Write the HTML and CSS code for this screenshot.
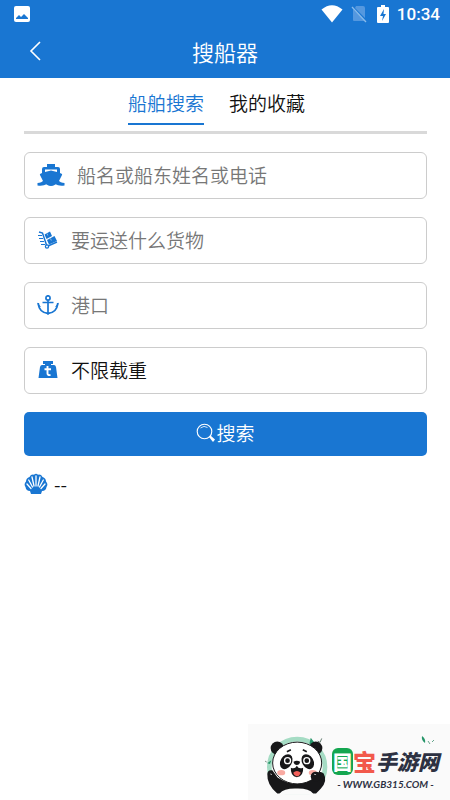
FILE: index.html
```html
<!DOCTYPE html>
<html lang="zh-CN">
<head>
<meta charset="utf-8">
<meta name="viewport" content="width=device-width, initial-scale=1">
<title>搜船器</title>
<link rel="stylesheet" href="styles.css">
</head>
<body>
<header class="header">
  <div class="status">
    <svg class="status-photo" viewBox="0 0 16 16" width="16" height="16" aria-hidden="true"><rect width="16" height="16" rx="2" fill="#fff"/><path d="M2 13V12L5 9 7 11 10 8 14 12V13Z" fill="#1976d2"/></svg>
    <svg viewBox="0 0 22 18" width="22" height="18" aria-hidden="true"><path d="M.5 4.500Q11-4 21.500 4.500L11 17.500Z" fill="#fff"/></svg>
    <svg class="status-sim" viewBox="0 0 16 18" width="16" height="18" aria-hidden="true"><path d="M5 1H12Q14 1 14 3V13L4 3ZM2 4 14 16H3Q2 16 2 15Z" fill="#5598df"/><path d="M1 2 15 17" stroke="#8bbbea" stroke-width="1.300"/></svg>
    <svg class="status-battery" viewBox="0 0 12 18" width="12" height="18" aria-hidden="true"><path d="M4 0H8V2H11Q12 2 12 3V17Q12 18 11 18H1Q0 18 0 17V3Q0 2 1 2H4Z" fill="#fff"/><path d="M7 4 3 11H6L5 16 9 9H6.500Z" fill="#1976d2"/></svg>
    <span class="clock">10:34</span>
  </div>
  <div class="titlebar">
    <button class="back" type="button" aria-label="返回"><svg viewBox="0 0 12 20" width="12" height="20"><path d="M11 1 2 10 11 19" fill="none" stroke="#fff" stroke-width="1.600"/></svg></button>
    <h1 class="title">搜船器</h1>
  </div>
</header>
<main class="main">
  <nav class="tabs">
    <a class="tab tab-active" href="#search">船舶搜索</a>
    <a class="tab" href="#saved">我的收藏</a>
  </nav>
  <form class="form" id="search">
    <label class="field">
      <svg viewBox="0 0 28 24" width="28" height="24" aria-hidden="true"><g fill="#1976d2"><path d="M10 1H18V4H21Q23 4 23 6V10L25 11Q25.500 11.500 24.500 13L22 18Q18 23 14 23Q10 23 6 18L3.500 13Q2.500 11.500 3 11L5 10V6Q5 4 7 4H10Z"/><path d="M.5 20Q4.500 20 7 17L10 21Q6 23.500 .5 22.500ZM27.500 20Q23.500 20 21 17L18 21Q22 23.500 27.500 22.500Z"/></g><path d="M8 9V6.500H20V9L14 7.500Z" fill="#fff"/></svg>
      <input class="control" type="text" aria-label="船名或船东" placeholder="船名或船东姓名或电话">
    </label>
    <label class="field">
      <svg viewBox="0 0 22 20" width="22" height="20" aria-hidden="true"><g fill="none" stroke="#1976d2"><path d="M2 2 5.500 3 10 16.500 20 12" stroke-width="1.500"/><path d="M1 5.500H5M2 8.500H6M3 11.500H7M4 14.500H8" stroke-width="1"/><circle cx="10" cy="16.500" r="1.600" fill="#fff" stroke-width="1.300"/></g><path d="M7.500 4.500 13 1.500 15 6 9.500 9ZM10 10 17.500 6 20 11 12 14.500Z" fill="#1976d2"/><path d="m10 3.500.8 2M13.500 8.500l.8 2" stroke="#8fbce8"/></svg>
      <input class="control" type="text" aria-label="货物" placeholder="要运送什么货物">
    </label>
    <label class="field">
      <svg viewBox="0 0 22 20" width="22" height="20" aria-hidden="true"><g fill="none" stroke="#1976d2" stroke-width="1.700"><circle cx="11" cy="2.900" r="2.100"/><path d="M11 5V19M5.500 7.500H16.500M1.200 8Q2 17.500 11 18.500Q20 17.500 20.800 8"/></g><path d="M.3 7.500 4 12 1 11.500ZM21.700 7.500 18 12 21 11.500ZM8 17.500H14L11 20Z" fill="#1976d2"/></svg>
      <input class="control" type="text" aria-label="港口" placeholder="港口">
    </label>
    <label class="field">
      <svg viewBox="0 0 22 20" width="22" height="20" aria-hidden="true"><path d="M6 1H16V4H14V5H17Q18.500 5 19 7L20.500 18H1.500L3 7Q3.500 5 5 5H8V4H6Z" fill="#1976d2"/><path d="M10.500 6V13.500Q10.500 15.500 13.500 15M7.500 9.200H14" fill="none" stroke="#fff" stroke-width="1.900"/></svg>
      <select class="control" aria-label="载重"><option>不限载重</option></select>
    </label>
    <button class="submit" type="submit">
      <svg viewBox="0 0 20 20" width="20" height="20" aria-hidden="true"><circle cx="8.500" cy="8.500" r="7.300" fill="none" stroke="#fff" stroke-width="1.100"/><path d="M4.500 5Q8 2 11.500 4.500" fill="none" stroke="#fff" stroke-width=".8"/><path d="m13 14 1.500-1.500 4.500 4-2 2.500Z" fill="#fff"/></svg>搜索
    </button>
  </form>
  <p class="result">
    <svg viewBox="0 0 24 22" width="24" height="22" aria-hidden="true"><path d="M7 21 6 18Q2 18 1.500 14Q-.5 11 2 8.500Q2 5 5.500 4Q7 1 10 1.700Q12 0 14 1.700Q17 1 18.500 4Q22 5 22 8.500Q24.500 11 22.500 14Q22 18 18 18L17 21Z" fill="#1976d2"/><g fill="none" stroke="#fff" stroke-width="1.300" stroke-linecap="round"><path d="M12 3V13M8 4 10 13M16 4 14 13M4.700 7 8.500 14M19.300 7 15.500 14M3 11 7 15.500M21 11 17 15.500"/></g></svg>
    <span>--</span>
  </p>
</main>
<aside class="brand">
  <svg viewBox="60 45 190 180" width="63" height="60" aria-hidden="true">
    <circle cx="157" cy="141" r="84" fill="none" stroke="#a5dcc4" stroke-width="14"/>
    <path d="M104 200H210V225H104Z" fill="#fafafa"/>
    <path d="M194 70 198 53 210 69 204 79ZM67 130 79 121 75 132Z" fill="#269569"/>
    <path d="m219 63 7 4 5-12M60 122l5 5" fill="none" stroke="#60786d" stroke-width="3"/>
    <circle cx="97" cy="84" r="20" fill="#171719"/><circle cx="213" cy="84" r="20" fill="#171719"/>
    <path d="M67 162Q68 148 82 151L98 173Q150 208 198 180L206 166Q222 148 237 161Q250 184 228 207L214 221H97Q65 194 67 162Z" fill="#171719"/>
    <path d="M104 221Q117 205 155 206Q193 205 205 221V225H104Z" fill="#fafafa"/>
    <ellipse cx="157" cy="129" rx="74" ry="63" fill="#fff" stroke="#171719" stroke-width="3"/>
    <ellipse cx="124" cy="125" rx="17" ry="24" transform="rotate(30 124 125)" fill="#171719"/><ellipse cx="189" cy="125" rx="17" ry="24" transform="rotate(-30 189 125)" fill="#171719"/>
    <g fill="#171719" stroke="#fff" stroke-width="4"><circle cx="128" cy="122" r="9"/><circle cx="186" cy="122" r="9"/></g>
    <ellipse cx="109" cy="158" rx="12" ry="8" fill="#f9aaa2"/><ellipse cx="204" cy="158" rx="12" ry="8" fill="#f9aaa2"/>
    <path d="M146 125Q156 119 166 125Q164 135 156 135Q148 135 146 125Z" fill="#171719"/>
    <path d="M138 143Q150 149 156 137Q162 149 175 143Q177 168 156 172Q136 168 138 143Z" fill="#171719"/><path d="M145 158Q156 148 168 158Q163 170 155 169Q148 168 145 158Z" fill="#f3605b"/>
    <path d="m126 95 12-6M174 89l12 6" stroke="#171719" stroke-width="5"/>
    <circle cx="213" cy="170" r="15" fill="#171719"/><path d="m208 163 6 1M76 162l5 2" stroke="#fff" stroke-width="2"/>
  </svg>
  <div class="brand-text">
    <svg class="leaves" viewBox="0 0 14 10" width="14" height="10" aria-hidden="true"><path d="M1 1Q5 4 4 8Q0 5 1 1Z" fill="#269569"/><path d="m7 6 2 3M11 7l2-2" stroke="#65a68c"/></svg>
    <div class="brand-name"><span class="brand-green">国</span><span class="brand-red">宝</span><span class="brand-dark">手游网</span></div>
    <div class="brand-url">- WWW.GB315.COM -</div>
  </div>
</aside>
</body>
</html>
```
FILE: styles.css
```css
* { box-sizing: border-box; }

body {
  margin: 0;
  min-height: 100vh;
  background: #fff;
  color: #111;
  font-family: "Noto Sans CJK SC", sans-serif;
  font-size: 19px;
  font-weight: 350;
}

svg { display: block; flex: none; }

.header { background: #1976d2; color: #fff; }

.status {
  display: flex;
  align-items: center;
  height: 28px;
  padding: 0 10px 0 14px;
}

.status-photo { margin-right: auto; }
.status-sim { margin-left: 8px; }
.status-battery { margin-left: 10px; }

.clock {
  margin-left: 8px;
  font: 500 17px/20px Roboto, sans-serif;
}

.titlebar {
  display: grid;
  grid-template-columns: 48px 1fr 48px;
  align-items: center;
  height: 50px;
  padding-bottom: 4px;
}

.back {
  display: flex;
  justify-content: flex-end;
  padding: 0 7px 0 0;
  border: 0;
  background: none;
}

.title {
  margin: 0;
  font-size: 22px;
  font-weight: 350;
  line-height: 30px;
  text-align: center;
}

.main { padding: 8px 23px 0 24px; }

.tabs {
  display: flex;
  justify-content: center;
  gap: 25px;
  padding: 0 18px 6px 0;
  border-bottom: 3px solid #d9d9d9;
}

.tab {
  height: 39px;
  border-bottom: 2px solid transparent;
  color: #111;
  line-height: 34px;
  text-decoration: none;
}

.tab-active { border-color: #1976d2; color: #1976d2; }

.form {
  display: flex;
  flex-direction: column;
  gap: 18px;
  margin-top: 18px;
}

.field {
  display: flex;
  align-items: center;
  gap: 12px;
  height: 47px;
  padding: 0 12px 2px;
  border: 1px solid #ccc;
  border-radius: 6px;
}

.control {
  flex: 1;
  min-width: 0;
  height: 40px;
  padding: 0;
  border: 0;
  outline: 0;
  appearance: none;
  background: none;
  color: #111;
  font: inherit;
}

.control::placeholder { color: #777; opacity: 1; }

.submit {
  display: flex;
  align-items: center;
  justify-content: center;
  height: 44px;
  padding: 0 0 3px;
  border: 0;
  border-radius: 5px;
  background: #1976d2;
  color: #fff;
  font: inherit;
}

.result {
  display: flex;
  align-items: center;
  gap: 6px;
  margin: 14px 0 0;
  line-height: 28px;
}

.brand {
  position: fixed;
  right: 0;
  bottom: 0;
  display: flex;
  align-items: flex-end;
  gap: 4px;
  height: 76px;
  padding: 0 11px 5px 17px;
  background: #fafafa;
}

.brand-text {
  display: flex;
  flex-direction: column;
  align-items: center;
  padding-bottom: 4px;
}

.leaves { align-self: flex-end; margin-right: 4px; }

.brand-name {
  display: flex;
  align-items: center;
  height: 32px;
  font-weight: 900;
}

.brand-green {
  padding: 0 1px;
  border-radius: 6px;
  background: #14a650;
  color: #fff;
  font-size: 19px;
  line-height: 27px;
}

.brand-red { color: #f2594b; font-size: 23px; }
.brand-dark { color: #2d3142; font-size: 21px; font-style: italic; }

.brand-url {
  color: #2d3142;
  font: italic 700 10px/14px Lato, sans-serif;
}
```
